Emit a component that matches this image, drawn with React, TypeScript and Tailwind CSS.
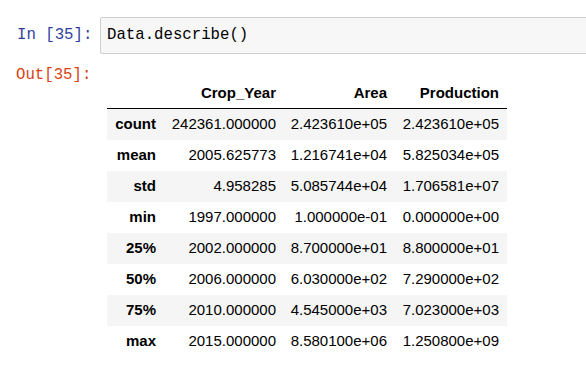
import React from "react";

const rows = [
  ["count", "242361.000000", "2.423610e+05", "2.423610e+05"],
  ["mean", "2005.625773", "1.216741e+04", "5.825034e+05"],
  ["std", "4.958285", "5.085744e+04", "1.706581e+07"],
  ["min", "1997.000000", "1.000000e-01", "0.000000e+00"],
  ["25%", "2002.000000", "8.700000e+01", "8.800000e+01"],
  ["50%", "2006.000000", "6.030000e+02", "7.290000e+02"],
  ["75%", "2010.000000", "4.545000e+03", "7.023000e+03"],
  ["max", "2015.000000", "8.580100e+06", "1.250800e+09"],
];

const App = () => {
  return (
    <div className="w-[586px] h-[371px] bg-white overflow-hidden relative">
      {/* input cell */}
      <div className="flex items-center mt-[17px]">
        <div className="w-[100px] pl-[17px] font-['Liberation_Mono',monospace] text-[15.7px] text-[#303F9F]">
          In [35]:
        </div>
        <div className="flex-1 h-[37px] flex items-center pl-[6px] bg-[#f7f7f7] border border-[#cfcfcf] rounded-l-[2px] mr-[-4px] font-['Liberation_Mono',monospace] text-[15.7px] text-black">
          Data.describe()
        </div>
      </div>

      {/* output cell */}
      <div className="flex mt-[6px]">
        <div className="w-[107px] pl-[16px] font-['Liberation_Mono',monospace] text-[15.7px] text-[#D84315] leading-[30px]">
          Out[35]:
        </div>
        <div className="mt-[19px] font-['Liberation_Sans',Arial,sans-serif] text-[15px] text-black">
          <div className="grid grid-cols-[57px_120px_111px_112px] h-[30px] items-center border-b border-black font-bold text-right">
            <div></div>
            <div className="pr-[8px]">Crop_Year</div>
            <div className="pr-[8px]">Area</div>
            <div className="pr-[8px]">Production</div>
          </div>
          {rows.map((r, i) => (
            <div
              key={r[0]}
              className={
                "grid grid-cols-[57px_120px_111px_112px] h-[31px] items-center text-right " +
                (i % 2 === 0 ? "bg-[#f5f5f5]" : "bg-white")
              }
            >
              <div className="pr-[8px] font-bold">{r[0]}</div>
              <div className="pr-[8px]">{r[1]}</div>
              <div className="pr-[8px]">{r[2]}</div>
              <div className="pr-[8px]">{r[3]}</div>
            </div>
          ))}
        </div>
      </div>
    </div>
  );
};

export default App;
